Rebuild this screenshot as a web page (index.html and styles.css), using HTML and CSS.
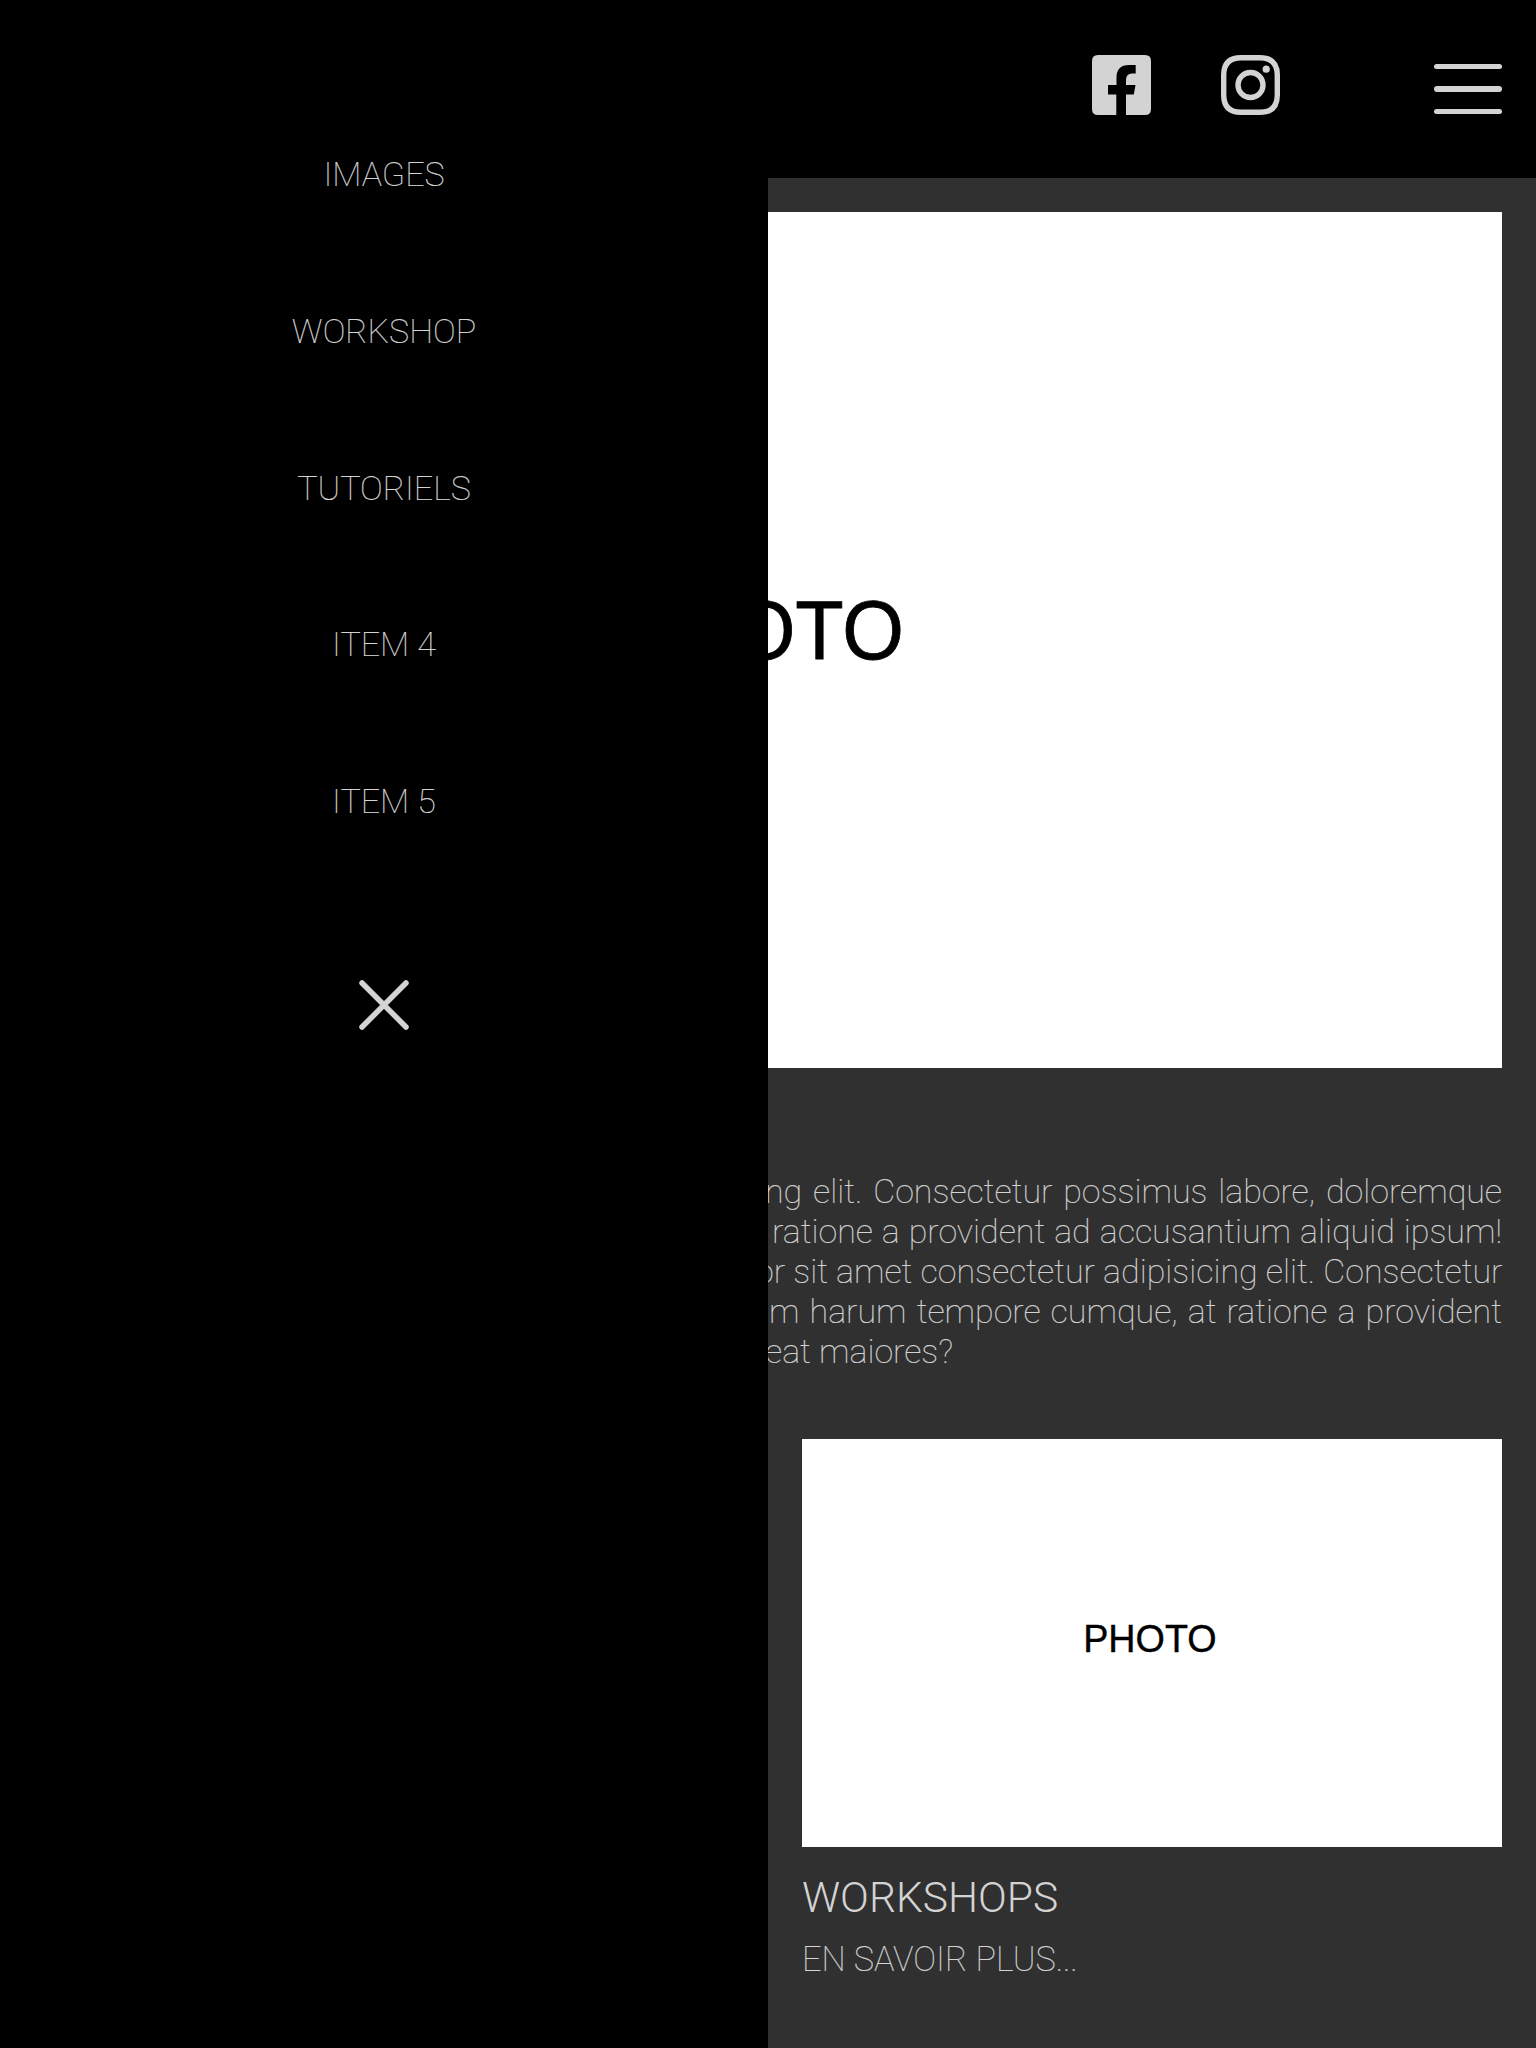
FILE: index.html
```html
<!DOCTYPE html>
<html lang="fr">
<head>
<meta charset="utf-8">
<title>Photo</title>
<link rel="stylesheet" href="styles.css">
</head>
<body>
<header class="header">
  <a class="social" href="#" aria-label="Facebook"><svg viewBox="0 0 59 60" width="59" height="60"><path fill="currentColor" d="M6 0H53Q59 0 59 6V54Q59 60 53 60H34V39.500H41.800L43.500 30H34V25Q34 18.500 40 18.500H43.700V10H37Q24.500 10 24.500 22.500V30H16V39.500H24.300V60H6Q0 60 0 54V6Q0 0 6 0Z"/></svg></a>
  <a class="social" href="#" aria-label="Instagram"><svg viewBox="0 0 59 60" width="59" height="60"><g fill="none" stroke="currentColor" stroke-width="5.400"><path d="M20 2.700H39Q56.300 2.700 56.300 20V40Q56.300 57.300 39 57.300H20Q2.700 57.300 2.700 40V20Q2.700 2.700 20 2.700Z"/><circle cx="29.500" cy="30" r="12.500"/></g><circle cx="45.200" cy="14.200" r="3.600" fill="currentColor"/></svg></a>
  <button class="burger" aria-label="Menu"><span></span><span></span><span></span></button>
</header>
<nav class="menu">
  <a href="#">IMAGES</a>
  <a href="#">WORKSHOP</a>
  <a href="#">TUTORIELS</a>
  <a href="#">ITEM 4</a>
  <a href="#">ITEM 5</a>
  <svg class="close" viewBox="0 0 50 50" width="50" height="50"><path d="M3 3L47 47M47 3L3 47" stroke="currentColor" stroke-width="5.500" stroke-linecap="round"/></svg>
</nav>
<main class="content">
  <div class="photo photo-large"><span>PHOTO</span></div>
  <p class="intro">
    <span class="line-1">ng elit. Consectetur possimus labore, doloremque</span>
    <span class="line-2">ratione a provident ad accusantium aliquid ipsum!</span>
    <span class="line-3">or sit amet consectetur adipisicing elit. Consectetur</span>
    <span class="line-4">m harum tempore cumque, at ratione a provident</span>
    <span class="last">eat maiores?</span>
  </p>
  <section class="cards">
    <article class="card">
      <div class="photo photo-small"><span>PHOTO</span></div>
      <h2>WORKSHOPS</h2>
      <a href="#">EN SAVOIR PLUS...</a>
    </article>
  </section>
</main>
</body>
</html>
```
FILE: styles.css
```css
* { box-sizing: border-box; margin: 0; padding: 0; }
body {
  height: 2048px;
  overflow: hidden;
  background: #303030;
  color: #d3d3d3;
  font: 100 34px/40px Roboto, sans-serif;
}
a { color: inherit; text-decoration: none; }
svg { display: block; }
.header {
  display: flex;
  justify-content: flex-end;
  align-items: flex-start;
  height: 178px;
  padding: 55px 34px 0 0;
  background: #000;
}
.social { margin-right: 70px; }
.burger {
  display: flex;
  flex-direction: column;
  justify-content: space-between;
  width: 68px;
  height: 50px;
  margin: 9px 0 0 84px;
  border: 0;
  background: none;
}
.burger span { height: 5px; border-radius: 3px; background: #d3d3d3; }
.burger span:nth-child(2) { height: 6px; }
.menu {
  position: absolute;
  z-index: 2;
  top: 0;
  left: 0;
  display: flex;
  flex-direction: column;
  align-items: center;
  width: 768px;
  height: 2048px;
  padding-top: 154px;
  background: #000;
}
.menu a { height: 40px; margin-bottom: 116.800px; }
.menu a, .intro, .card a { -webkit-text-stroke: .2px #d3d3d3; }
.close { margin-top: 42px; }
.content { padding: 34px 34px 0; }
.photo {
  display: flex;
  justify-content: center;
  align-items: center;
  background: #fff;
  color: #000;
  font-family: "Liberation Sans", sans-serif;
  font-weight: 400;
  -webkit-text-stroke: .4px #000;
}
.photo span { transform: scaleX(.955); }
.photo-large { height: 856px; padding: 0 8px 18px 0; font-size: 83px; line-height: 96px; -webkit-text-stroke-width: .8px; }
.photo-small { height: 408px; padding: 0 4px 10px 0; font-size: 39.500px; }
.intro {
  display: flex;
  flex-direction: column;
  width: 742px;
  margin: 103px 0 68px auto;
}
.intro span { white-space: nowrap; text-align-last: justify; }
.intro .line-1 { padding-left: 5px; }
.intro .line-2 { padding-left: 12px; }
.intro .line-3 { margin-left: -5px; }
.intro .line-4 { padding-left: 9px; }
.intro .last { padding-left: 5px; text-align-last: left; }
.cards { display: grid; grid-template-columns: 1fr 1fr; gap: 68px; }
.card { display: flex; flex-direction: column; grid-column: 2; }
.card h2 { margin-top: 26px; font-size: 42.500px; font-weight: 300; line-height: 49px; }
.card a { margin-top: 17px; font-size: 34.200px; }
```
